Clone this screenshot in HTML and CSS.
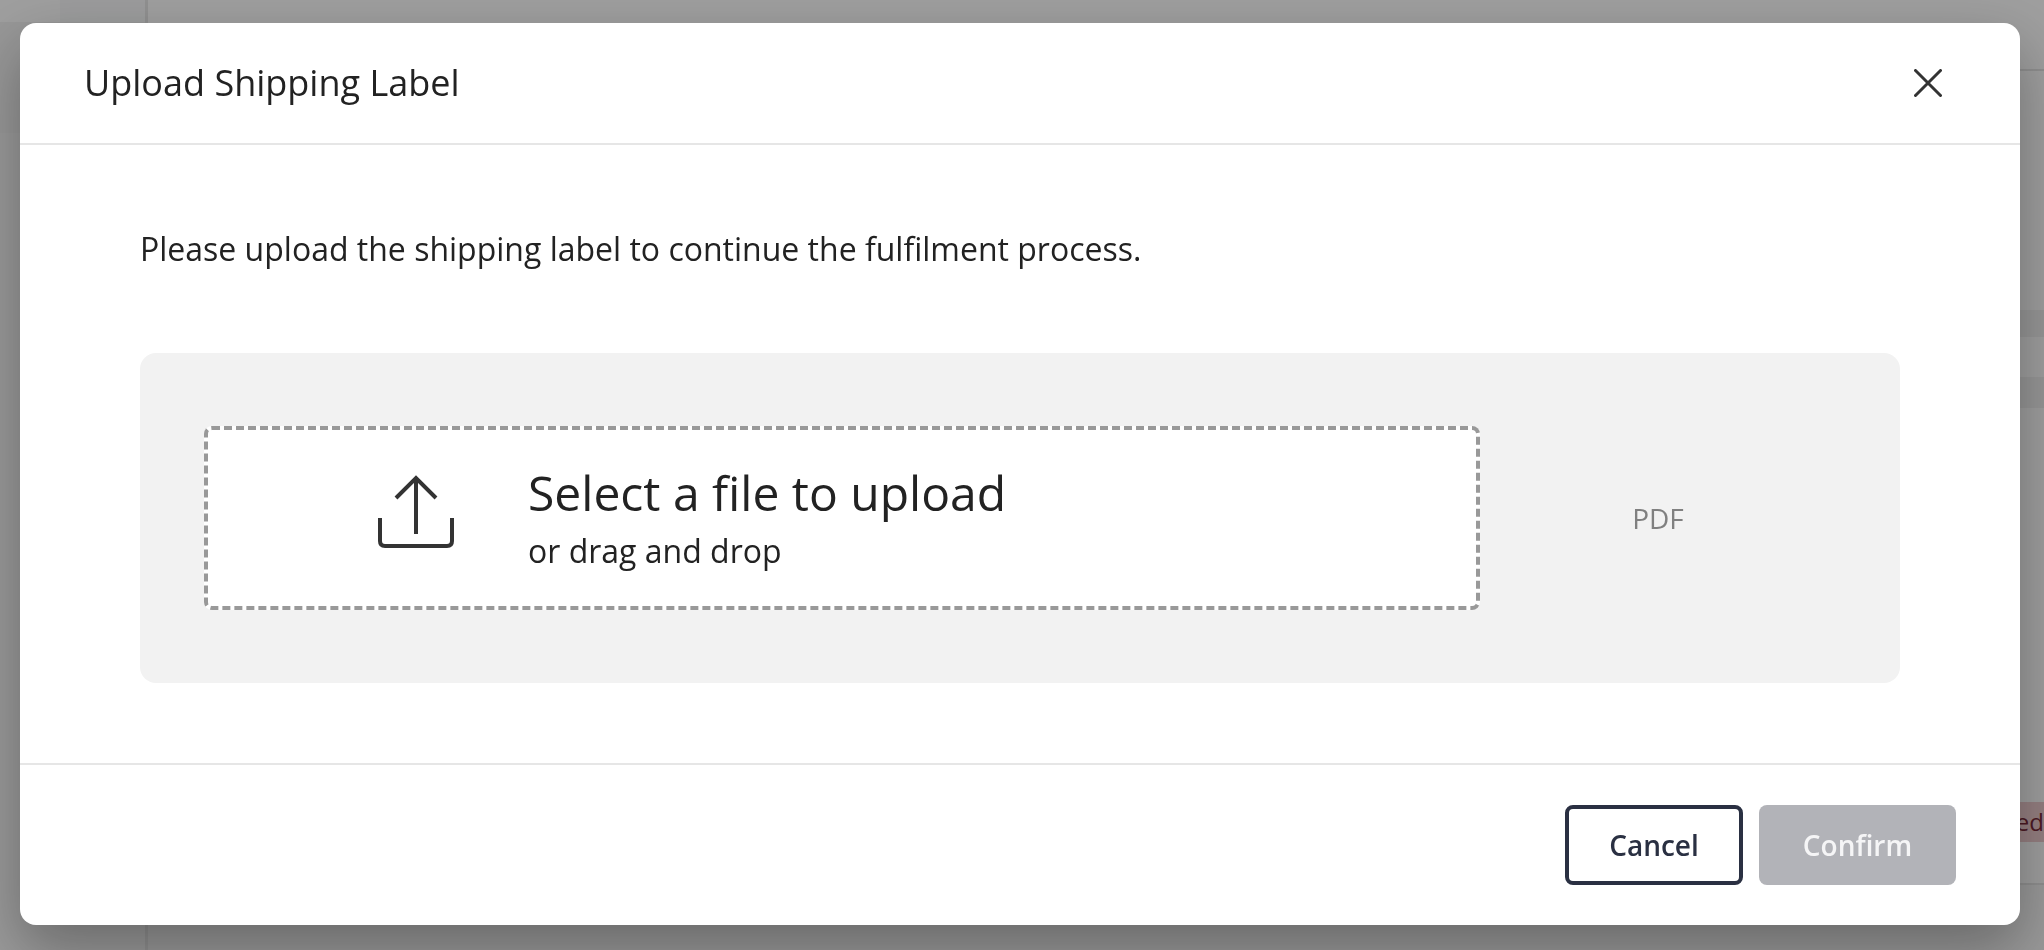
FILE: index.html
```html
<!DOCTYPE html>
<html lang="en">
<head>
<meta charset="UTF-8">
<title>Upload Shipping Label</title>
<link rel="stylesheet" href="styles.css">
</head>
<body>

<!-- page behind the dialog -->
<div class="page">
    <div class="sidebar">
        <div class="sidebar-top">
            <div class="sidebar-logo"></div>
            <div class="sidebar-user"></div>
        </div>
        <div class="sidebar-nav"></div>
    </div>
    <div class="main">
        <div class="main-head"></div>
        <div class="main-space"></div>
        <div class="row row-dark row-a"></div>
        <div class="row row-b"></div>
        <div class="row row-dark row-c"></div>
        <div class="main-fill"></div>
        <div class="row row-status"><span class="status">ed</span></div>
        <div class="row row-last"></div>
        <div class="main-end"></div>
    </div>
</div>

<div class="overlay">
    <div class="modal">
        <div class="modal-header">
            <h2 class="modal-title">Upload Shipping Label</h2>
            <svg class="close-icon" width="28" height="28" viewBox="0 0 28 28">
                <path d="M1.5 1.5L26.5 26.5M26.5 1.5L1.5 26.5"/>
            </svg>
        </div>
        <div class="modal-body">
            <p class="intro">Please upload the shipping label to continue the fulfilment process.</p>
            <div class="upload-panel">
                <div class="dropzone">
                    <svg class="upload-icon" width="76" height="73" viewBox="0 0 76 73">
                        <path d="M38 59V3M18 23L38 3L58 23"/>
                        <path d="M2 43V66Q2 71 7 71H69Q74 71 74 66V43"/>
                    </svg>
                    <div class="dropzone-text">
                        <div class="dropzone-title">Select a file to upload</div>
                        <div class="dropzone-sub">or drag and drop</div>
                    </div>
                </div>
                <div class="file-types">PDF</div>
            </div>
        </div>
        <div class="modal-footer">
            <button class="btn btn-cancel">Cancel</button>
            <button class="btn btn-confirm">Confirm</button>
        </div>
    </div>
</div>

</body>
</html>
```

FILE: styles.css
```css
* {
    box-sizing: border-box;
}
body {
    margin: 0;
    height: 950px;
    overflow: hidden;
    font-family: "Open Sans", "Noto Sans", sans-serif;
    color: #222222;
}

/* page behind */
.page {
    display: flex;
    height: 950px;
    background-color: #ffffff;
}
.sidebar {
    width: 148px;
    border-right: 3px solid #e8e8e8;
    background-color: #f8f8f8;
}
.sidebar-top {
    display: flex;
    height: 22px;
}
.sidebar-logo {
    width: 60px;
    background-color: #ffffff;
}
.sidebar-user {
    flex: 1;
    background-color: #fafbfc;
}
.sidebar-nav {
    height: 111px;
    background-color: #f4f4f4;
}
.main {
    flex: 1;
    display: flex;
    flex-direction: column;
}
.main-head {
    height: 71px;
    border-bottom: 2px solid #e6e6e6;
    flex-shrink: 0;
}
.main-space {
    height: 239px;
}
.row-dark {
    background-color: #f2f2f2;
}
.row-a {
    height: 27px;
}
.row-b {
    height: 40px;
}
.row-c {
    height: 41px;
    border-bottom: 10px solid #ffffff;
}
.main-fill {
    height: 384px;
}
.row-status {
    display: flex;
    justify-content: flex-end;
    height: 40px;
}
.status {
    width: 200px;
    height: 40px;
    font-size: 24px;
    line-height: 40px;
    text-align: right;
    white-space: nowrap;
    color: #7a2a3a;
    background-color: #f0cdd0;
}
.row-last {
    height: 43px;
    border-bottom: 2px solid #e6e6e6;
}
.main-end {
    flex: 1;
    background-color: #f6f6f6;
}

/* dialog */
.overlay {
    position: fixed;
    top: 0;
    left: 0;
    right: 0;
    bottom: 0;
    padding: 23px 24px 25px 20px;
    background-color: rgba(0, 0, 0, 0.38);
}
.modal {
    display: flex;
    flex-direction: column;
    height: 902px;
    border-radius: 16px;
    background-color: #ffffff;
    box-shadow: 0 24px 60px rgba(0, 0, 0, 0.32);
}
.modal-header {
    display: flex;
    align-items: center;
    justify-content: space-between;
    height: 122px;
    padding: 0 78px 0 64px;
    border-bottom: 2px solid #e6e6e6;
}
.modal-title {
    margin: 0 0 2px;
    font-size: 36px;
    font-weight: 400;
}
.close-icon path {
    fill: none;
    stroke: #333333;
    stroke-width: 3;
    stroke-linecap: round;
}
.modal-body {
    flex: 1;
    padding: 80px 120px;
}
.intro {
    margin: 0 0 80px;
    font-size: 32px;
    line-height: 48px;
}
.upload-panel {
    display: flex;
    align-items: center;
    height: 330px;
    padding: 0 64px;
    border-radius: 16px;
    background-color: #f2f2f2;
}
.dropzone {
    display: flex;
    align-items: center;
    gap: 74px;
    width: 1276px;
    height: 184px;
    padding-left: 170px;
    border: 4px dashed #999999;
    border-radius: 8px;
    background-color: #ffffff;
}
.upload-icon {
    margin-bottom: 13px;
}
.upload-icon path {
    fill: none;
    stroke: #333333;
    stroke-width: 4;
}
.dropzone-title {
    font-size: 48px;
    line-height: 60px;
}
.dropzone-sub {
    margin-top: 6px;
    font-size: 32px;
    line-height: 44px;
}
.file-types {
    flex: 1;
    text-align: center;
    font-size: 28px;
    color: #808080;
}
.modal-footer {
    display: flex;
    justify-content: flex-end;
    gap: 16px;
    height: 162px;
    padding: 40px 64px;
    border-top: 2px solid #e6e6e6;
}
.btn {
    height: 80px;
    font-family: inherit;
    font-size: 28px;
    font-weight: 600;
    border-radius: 8px;
}
.btn-cancel {
    width: 178px;
    border: 4px solid #2a3042;
    color: #2a3042;
    background-color: #ffffff;
}
.btn-confirm {
    width: 197px;
    border: none;
    color: #f5f5f6;
    background-color: #b2b3b8;
}
```
